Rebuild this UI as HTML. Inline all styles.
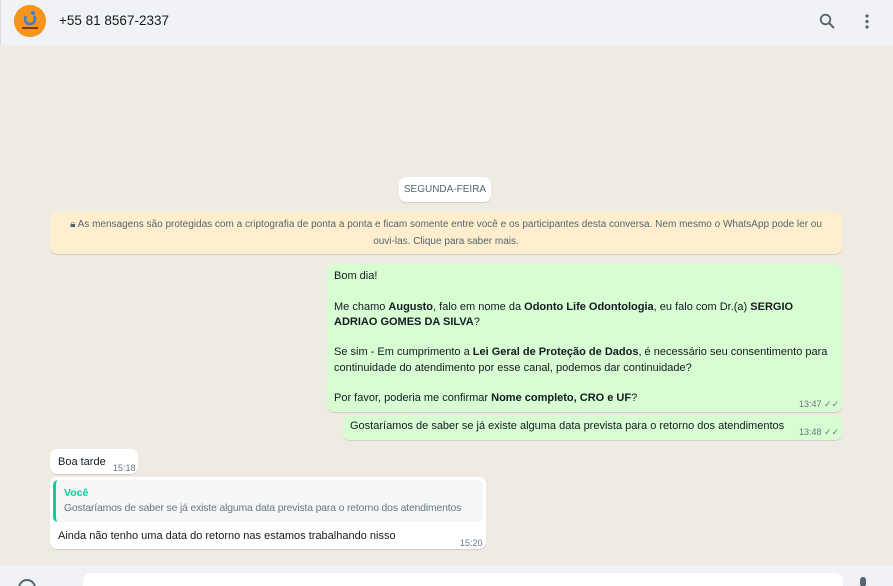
<!DOCTYPE html>
<html style="width:893px;height:586px;overflow:hidden"><head><meta charset="utf-8"><style>
*{margin:0;padding:0;box-sizing:border-box}
body{width:893px;height:586px;overflow:hidden;font-family:"Liberation Sans",sans-serif;background:#efeae2;position:relative;color:#111b21}
.hdr{position:absolute;left:0;top:0;width:893px;height:45px;background:#f0f2f5;border-left:1px solid #ddd}
.av{position:absolute;left:13px;top:5px;width:32px;height:32px;border-radius:50%;background:#f7941d}
.num{position:absolute;left:58px;top:13px;font-size:13.5px;color:#111b21}
.b{position:absolute;border-radius:7px;box-shadow:0 1px .5px rgba(11,20,26,.13);font-size:11px;line-height:15.3px}
.g{background:#d9fdd3}.w{background:#fff}
.t{position:absolute;font-size:9px;color:#667781;white-space:nowrap}
.ft{position:absolute;left:0;top:565px;width:893px;height:21px;background:#f0f2f5;overflow:hidden}
</style></head><body>
<div class="hdr">
<div class="av"><svg width="32" height="32"><circle cx="16" cy="16" r="16" fill="#f7941d"/><path d="M12 11a5 5 0 1 0 8 0" stroke="#3a7bd5" stroke-width="2.5" fill="none"/><circle cx="19" cy="8" r="2" fill="#3a7bd5"/><rect x="8" y="22" width="16" height="2" fill="#7a3b00"/></svg></div>
<div class="num">+55 81 8567-2337</div>
<svg style="position:absolute;left:818px;top:13px" width="16" height="16"><circle cx="6.5" cy="6.5" r="4.8" stroke="#54656f" stroke-width="1.8" fill="none"/><path d="M10 10l5 5" stroke="#54656f" stroke-width="2"/></svg>
<svg style="position:absolute;left:863px;top:14px" width="6" height="16"><circle cx="3" cy="2" r="1.6" fill="#54656f"/><circle cx="3" cy="7.5" r="1.6" fill="#54656f"/><circle cx="3" cy="13" r="1.6" fill="#54656f"/></svg>
</div>

<div class="b w" style="left:399px;top:177px;width:92px;height:25px;font-size:10px;line-height:25px;text-align:center;color:#54656f">SEGUNDA-FEIRA</div>

<div class="b" style="left:50px;top:212px;width:792px;height:42px;background:#ffeecd;font-size:10px;line-height:17px;text-align:center;color:#54656f;padding-top:4px">🔒︎ As mensagens são protegidas com a criptografia de ponta a ponta e ficam somente entre você e os participantes desta conversa. Nem mesmo o WhatsApp pode ler ou<br>ouvi-las. Clique para saber mais.</div>

<div class="b g" style="left:327px;top:264px;width:515px;height:148px;padding:5px 7px">Bom dia!<br><br>Me chamo <b>Augusto</b>, falo em nome da <b>Odonto Life Odontologia</b>, eu falo com Dr.(a) <b>SERGIO<br>ADRIAO GOMES DA SILVA</b>?<br><br>Se sim - Em cumprimento a <b>Lei Geral de Proteção de Dados</b>, é necessário seu consentimento para<br>continuidade do atendimento por esse canal, podemos dar continuidade?<br><br>Por favor, poderia me confirmar <b>Nome completo, CRO e UF</b>?
<span class="t" style="left:472px;top:133px">13:47 ✓✓</span></div>

<div class="b g" style="left:343px;top:415px;width:499px;height:25px;padding:4px 7px">Gostaríamos de saber se já existe alguma data prevista para o retorno dos atendimentos<span class="t" style="left:456px;top:10px">13:48 ✓✓</span></div>

<div class="b w" style="left:50px;top:449px;width:88px;height:25px;padding:6px 8px">Boa tarde<span class="t" style="left:63px;top:12px">15:18</span></div>

<div class="b w" style="left:50px;top:477px;width:436px;height:72px">
<div style="position:absolute;left:3px;top:3px;width:430px;height:42px;background:#f5f6f6;border-radius:5px;border-left:3px solid #06cf9c;padding:5px 8px;line-height:16px;white-space:nowrap;overflow:hidden">
<div style="color:#06cf9c;font-weight:bold;font-size:10.5px">Você</div>
<div style="color:#667781;font-size:10.4px;letter-spacing:-0.15px">Gostaríamos de saber se já existe alguma data prevista para o retorno dos atendimentos</div></div>
<div style="position:absolute;left:8px;top:52px;white-space:nowrap">Ainda não tenho uma data do retorno nas estamos trabalhando nisso</div>
<span class="t" style="left:410px;top:59px">15:20</span></div>

<div class="ft">
<div style="position:absolute;left:18px;top:14px;width:18px;height:18px;border:2px solid #54656f;border-radius:50%"></div>
<div style="position:absolute;left:83px;top:8px;width:760px;height:20px;background:#fff;border-radius:8px"></div>
<div style="position:absolute;left:860px;top:12px;width:6px;height:10px;background:#54656f;border-radius:3px"></div>
</div>
</body></html>
